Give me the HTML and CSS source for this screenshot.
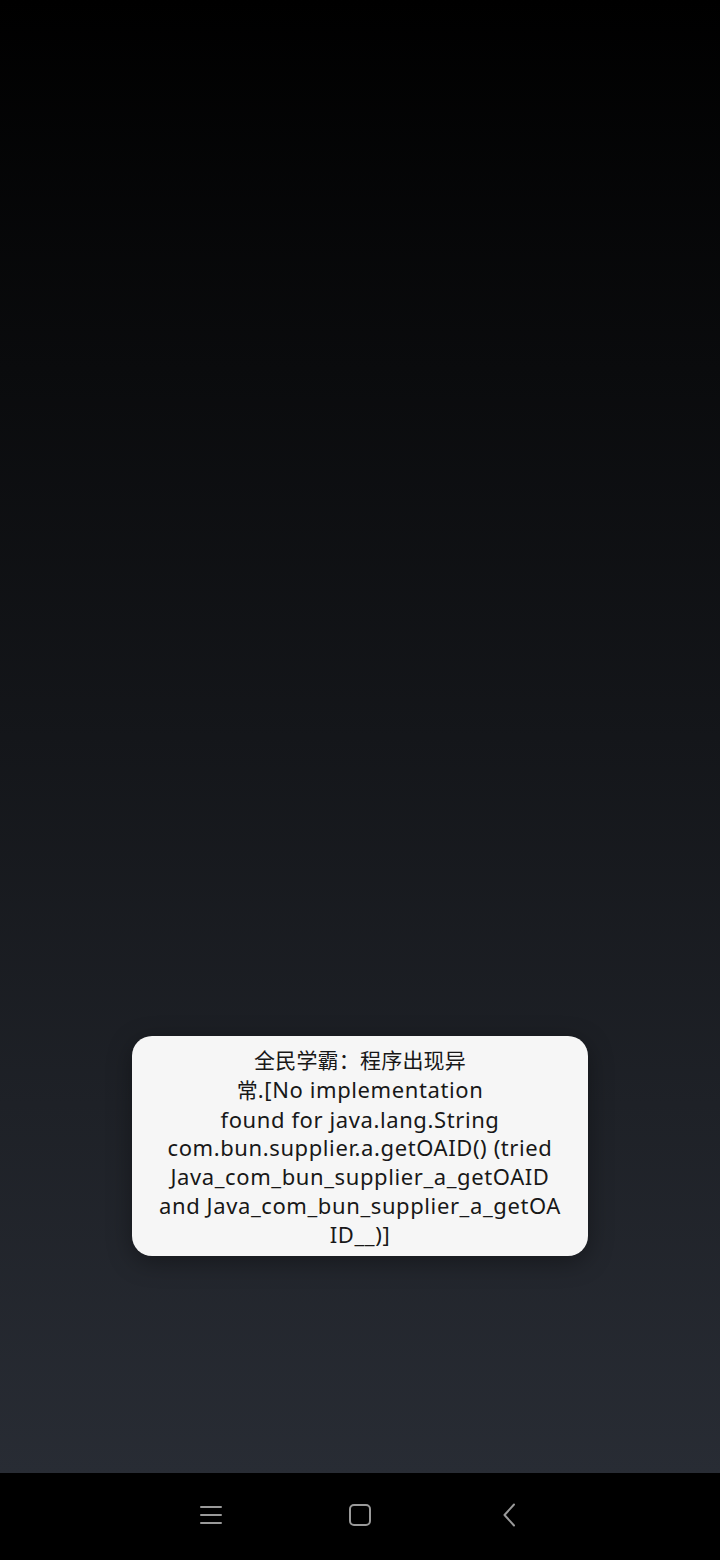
FILE: index.html
```html
<!DOCTYPE html>
<html lang="zh-CN">
<head>
    <meta charset="UTF-8">
    <meta name="viewport" content="width=device-width, initial-scale=1.0">
    <title>全民学霸</title>
    <link rel="stylesheet" href="styles.css">
</head>
<body>
    <div class="screen">
        <div class="toast">
            <span class="line cjk">全民学霸：程序出现异</span>
            <span class="line"><span class="cjk">常</span>.[No implementation</span>
            <span class="line">found for java.lang.String</span>
            <span class="line">com.bun.supplier.a.getOAID() (tried</span>
            <span class="line">Java_com_bun_supplier_a_getOAID</span>
            <span class="line">and Java_com_bun_supplier_a_getOA</span>
            <span class="line">ID__)]</span>
        </div>
    </div>
    <div class="navbar">
        <svg class="nav-icon" width="24" height="24" viewBox="0 0 24 24">
            <path d="M2 4h20M2 12h20M2 20h20" stroke="#9a9a9a" stroke-width="2" fill="none" stroke-linecap="round"/>
        </svg>
        <svg class="nav-icon" width="24" height="24" viewBox="0 0 24 24">
            <rect x="2" y="2" width="20" height="20" rx="4" stroke="#9a9a9a" stroke-width="2" fill="none"/>
        </svg>
        <svg class="nav-icon" width="24" height="24" viewBox="0 0 24 24">
            <path d="M17 1.5L7.5 12L17 22.5" stroke="#9a9a9a" stroke-width="2" fill="none" stroke-linecap="round" stroke-linejoin="round"/>
        </svg>
    </div>
</body>
</html>
```

FILE: styles.css
```css
* {
    box-sizing: border-box;
    margin: 0;
    padding: 0;
}
body {
    width: 720px;
    height: 1560px;
    display: flex;
    flex-direction: column;
    background-color: #000;
    font-family: "Noto Sans", "Noto Sans CJK SC", sans-serif;
    overflow: hidden;
}
.screen {
    height: 1473px;
    background: linear-gradient(#000000, #282c34);
    display: flex;
    flex-direction: column;
    justify-content: flex-end;
    align-items: center;
    padding-bottom: 217px;
}
.toast {
    width: 456px;
    height: 220px;
    background-color: #f6f6f6;
    border-radius: 20px;
    padding: 10px 10px;
    display: flex;
    flex-direction: column;
    align-items: center;
    box-shadow: 0 6px 24px rgba(0,0,0,0.35);
}
.line {
    display: block;
    white-space: nowrap;
    font-size: 22px;
    letter-spacing: 0.6px;
    line-height: 28.8px;
    color: #181818;
}
.cjk {
    font-size: 21px;
    letter-spacing: 0.2px;
}
.navbar {
    height: 87px;
    background-color: #000;
    display: flex;
    justify-content: center;
    align-items: center;
    gap: 125px;
    padding-bottom: 4px;
}
.nav-icon {
    display: block;
}
```
